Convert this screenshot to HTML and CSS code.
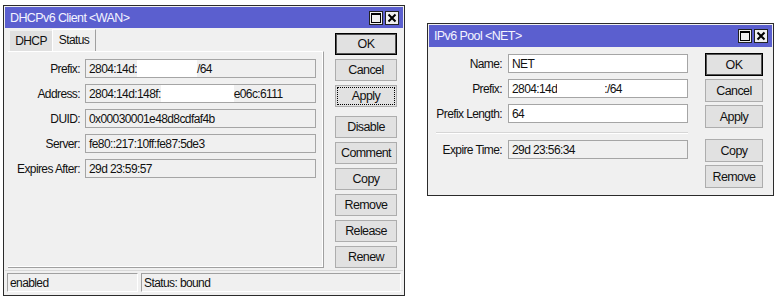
FILE: index.html
```html
<!DOCTYPE html>
<html lang="en">
<head>
    <meta charset="UTF-8">
    <title>DHCPv6 Client and IPv6 Pool</title>
    <link rel="stylesheet" href="styles.css">
</head>
<body>
<div class="Desktop">

    <!-- DHCPv6 client window -->
    <div class="Window ClientWindow">
        <div class="TitleBar">
            <span class="TitleText">DHCPv6 Client &lt;WAN&gt;</span>
            <span class="TitleButtons">
                <span class="TitleButton">
                    <svg width="10" height="10" viewBox="0 0 10 10"><rect x="0.5" y="0.5" width="9" height="9" fill="none" stroke="#000"/><line x1="0" y1="1.5" x2="10" y2="1.5" stroke="#000"/></svg>
                </span>
                <span class="TitleButton">
                    <svg width="10" height="10" viewBox="0 0 10 10"><path d="M1.5 1.5 L8.5 8.5 M8.5 1.5 L1.5 8.5" stroke="#000" stroke-width="2"/></svg>
                </span>
            </span>
        </div>
        <div class="WindowBody">
            <div class="TabArea">
                <div class="TabStrip">
                    <span class="Tab">DHCP</span>
                    <span class="Tab ActiveTab">Status</span>
                </div>
                <div class="TabPanel">
                    <div class="FieldRow">
                        <label class="FieldLabel">Prefix:</label>
                        <span class="Field ReadOnly">2804:14d:<span class="Hidden PrefixHidden"></span>/64</span>
                    </div>
                    <div class="FieldRow">
                        <label class="FieldLabel">Address:</label>
                        <span class="Field ReadOnly">2804:14d:148f:<span class="Hidden AddressHidden"></span>e06c:6111</span>
                    </div>
                    <div class="FieldRow">
                        <label class="FieldLabel">DUID:</label>
                        <span class="Field ReadOnly">0x00030001e48d8cdfaf4b</span>
                    </div>
                    <div class="FieldRow">
                        <label class="FieldLabel">Server:</label>
                        <span class="Field ReadOnly">fe80::217:10ff:fe87:5de3</span>
                    </div>
                    <div class="FieldRow">
                        <label class="FieldLabel">Expires After:</label>
                        <span class="Field ReadOnly">29d 23:59:57</span>
                    </div>
                </div>
            </div>
            <div class="ButtonColumn">
                <button class="Button DefaultButton">OK</button>
                <button class="Button">Cancel</button>
                <button class="Button FocusButton">Apply</button>
                <button class="Button GroupStart">Disable</button>
                <button class="Button">Comment</button>
                <button class="Button">Copy</button>
                <button class="Button">Remove</button>
                <button class="Button">Release</button>
                <button class="Button">Renew</button>
            </div>
        </div>
        <div class="StatusBar">
            <span class="StatusCell EnabledCell">enabled</span>
            <span class="StatusCell StateCell">Status: bound</span>
        </div>
    </div>

    <!-- IPv6 pool window -->
    <div class="Window PoolWindow">
        <div class="TitleBar">
            <span class="TitleText">IPv6 Pool &lt;NET&gt;</span>
            <span class="TitleButtons">
                <span class="TitleButton">
                    <svg width="10" height="10" viewBox="0 0 10 10"><rect x="0.5" y="0.5" width="9" height="9" fill="none" stroke="#000"/><line x1="0" y1="1.5" x2="10" y2="1.5" stroke="#000"/></svg>
                </span>
                <span class="TitleButton">
                    <svg width="10" height="10" viewBox="0 0 10 10"><path d="M1.5 1.5 L8.5 8.5 M8.5 1.5 L1.5 8.5" stroke="#000" stroke-width="2"/></svg>
                </span>
            </span>
        </div>
        <div class="WindowBody PoolBody">
            <div class="PoolFields">
                <div class="FieldRow">
                    <label class="FieldLabel">Name:</label>
                    <span class="Field">NET</span>
                </div>
                <div class="FieldRow">
                    <label class="FieldLabel">Prefix:</label>
                    <span class="Field">2804:14d<span class="Hidden PoolHidden"></span>:/64</span>
                </div>
                <div class="FieldRow">
                    <label class="FieldLabel">Prefix Length:</label>
                    <span class="Field">64</span>
                </div>
                <div class="Separator"></div>
                <div class="FieldRow">
                    <label class="FieldLabel">Expire Time:</label>
                    <span class="Field ReadOnly">29d 23:56:34</span>
                </div>
            </div>
            <div class="ButtonColumn PoolButtons">
                <button class="Button DefaultButton">OK</button>
                <button class="Button">Cancel</button>
                <button class="Button">Apply</button>
                <button class="Button GroupStart">Copy</button>
                <button class="Button">Remove</button>
            </div>
        </div>
    </div>

</div>
</body>
</html>
```

FILE: styles.css
```css
body {
    margin: 0;
    background: #fff;
    font-family: "Liberation Sans", Arial, sans-serif;
    font-size: 12px;
    letter-spacing: -0.6px;
    color: #111;
}

.Desktop {
    display: flex;
    align-items: flex-start;
    gap: 22px;
    padding: 5px 0 0 3px;
}

/* window frame */

.Window {
    display: flex;
    flex-direction: column;
    border: 1px solid #2b2b2b;
    padding: 1px;
    background: #f0f0f0;
}

.ClientWindow {
    width: 398px;
    height: 287px;
}

.PoolWindow {
    width: 343px;
    height: 169px;
    margin-top: 18px;
}

.TitleBar {
    display: flex;
    align-items: center;
    justify-content: space-between;
    height: 21px;
    padding: 0 4px 0 5px;
    background: #5b5fcf;
    color: #f4f4ff;
    font-size: 12.5px;
}

.PoolWindow .TitleBar {
    height: 22px;
}

.TitleButtons {
    display: flex;
    gap: 2px;
}

.TitleButton {
    display: flex;
    align-items: center;
    justify-content: center;
    width: 12px;
    height: 12px;
    border: 1px solid #222;
    background: #f0f0f0;
}

.WindowBody {
    display: flex;
    flex: 1;
    padding: 1px 6px 2px 3px;
}

/* tabs */

.TabArea {
    display: flex;
    flex-direction: column;
    width: 316px;
}

.TabStrip {
    display: flex;
    align-items: flex-end;
    height: 22px;
}

.Tab {
    display: flex;
    align-items: center;
    justify-content: center;
    height: 20px;
    width: 42px;
    margin-left: 2px;
    background: #e0e0e0;
}

.ActiveTab {
    height: 23px;
    width: 44px;
    margin-left: 0;
    margin-bottom: -1px;
    padding-bottom: 3px;
    box-sizing: border-box;
    background: #f0f0f0;
    border-left: 1px solid #fff;
    border-top: 1px solid #fff;
    border-right: 1px solid #a0a0a0;
}

.TabPanel {
    flex: 1;
    padding-top: 7px;
    border-top: 1px solid #fff;
    border-right: 1px solid #a0a0a0;
    border-bottom: 1px solid #a0a0a0;
    box-shadow: inset -1px -1px 0 #fff;
}

/* fields */

.FieldRow {
    display: flex;
    align-items: center;
    gap: 5px;
    height: 19px;
    margin-bottom: 6px;
}

.FieldLabel {
    width: 72px;
    text-align: right;
}

.Field {
    display: flex;
    align-items: center;
    box-sizing: border-box;
    width: 231px;
    height: 19px;
    padding-left: 3px;
    border: 1px solid #a5a5a5;
    background: #fff;
    white-space: nowrap;
}

.ReadOnly {
    background: #f0f0f0;
}

.Hidden {
    display: inline-block;
    height: 17px;
    background: #fff;
}

.PrefixHidden {
    width: 60px;
}

.AddressHidden {
    width: 73px;
}

.PoolHidden {
    width: 47px;
}

/* buttons */

.ButtonColumn {
    display: flex;
    flex-direction: column;
    gap: 4px;
    width: 62px;
    margin: 4px 0 0 11px;
}

.Button {
    height: 22px;
    padding: 0;
    border: 1px solid #adadad;
    background: #e1e1e1;
    font-family: inherit;
    font-size: 12.5px;
    letter-spacing: -0.6px;
    color: #111;
}

.DefaultButton {
    border: 1px solid #000;
    box-shadow: inset 0 0 0 1px #555;
}

.FocusButton {
    outline: 1px dotted #000;
    outline-offset: -3px;
}

.GroupStart {
    margin-top: 5px;
}

/* status bar */

.StatusBar {
    display: flex;
    gap: 3px;
    height: 24px;
    box-sizing: border-box;
    padding: 2px;
    border-top: 1px solid #d8d8d8;
}

.StatusCell {
    display: flex;
    align-items: center;
    padding-left: 2px;
    border-top: 1px solid #a0a0a0;
    border-left: 1px solid #a0a0a0;
    border-bottom: 1px solid #fff;
    border-right: 1px solid #fff;
}

.EnabledCell {
    width: 127px;
}

.StateCell {
    flex: 1;
}

/* pool window */

.PoolBody {
    padding: 0 8px 0 0;
}

.PoolFields {
    display: flex;
    flex-direction: column;
    padding-top: 7px;
}

.PoolFields .FieldRow {
    gap: 6px;
}

.PoolFields .FieldLabel {
    width: 73px;
}

.PoolFields .Field {
    width: 180px;
}

.Separator {
    height: 0;
    margin: 3px 0 6px 7px;
    border-top: 1px solid #d6d6d6;
    border-bottom: 1px solid #fff;
}

.PoolButtons {
    width: 58px;
    gap: 3px;
    margin: 6px 0 0 17px;
}

.PoolButtons .Button {
    height: 23px;
}

.PoolButtons .GroupStart {
    margin-top: 8px;
}
```
